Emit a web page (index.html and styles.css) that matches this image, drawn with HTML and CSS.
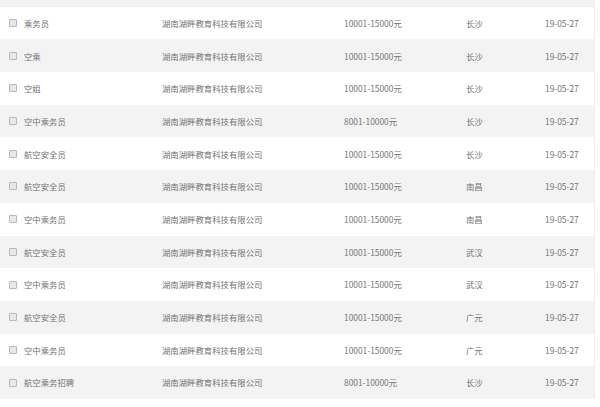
FILE: index.html
```html
<!DOCTYPE html>
<html lang="zh">
<head>
<meta charset="utf-8">
<link rel="stylesheet" href="styles.css">
</head>
<body>
<div class="list">
  <div class="row row-partial"></div>
  <div class="row"><span class="cb"></span><span class="c-name">乘务员</span><span class="c-co">湖南湖畔教育科技有限公司</span><span class="c-pay">10001-15000元</span><span class="c-city">长沙</span><span class="c-date">19-05-27</span></div>
  <div class="row"><span class="cb"></span><span class="c-name">空乘</span><span class="c-co">湖南湖畔教育科技有限公司</span><span class="c-pay">10001-15000元</span><span class="c-city">长沙</span><span class="c-date">19-05-27</span></div>
  <div class="row"><span class="cb"></span><span class="c-name">空姐</span><span class="c-co">湖南湖畔教育科技有限公司</span><span class="c-pay">10001-15000元</span><span class="c-city">长沙</span><span class="c-date">19-05-27</span></div>
  <div class="row"><span class="cb"></span><span class="c-name">空中乘务员</span><span class="c-co">湖南湖畔教育科技有限公司</span><span class="c-pay">8001-10000元</span><span class="c-city">长沙</span><span class="c-date">19-05-27</span></div>
  <div class="row"><span class="cb"></span><span class="c-name">航空安全员</span><span class="c-co">湖南湖畔教育科技有限公司</span><span class="c-pay">10001-15000元</span><span class="c-city">长沙</span><span class="c-date">19-05-27</span></div>
  <div class="row"><span class="cb"></span><span class="c-name">航空安全员</span><span class="c-co">湖南湖畔教育科技有限公司</span><span class="c-pay">10001-15000元</span><span class="c-city">南昌</span><span class="c-date">19-05-27</span></div>
  <div class="row"><span class="cb"></span><span class="c-name">空中乘务员</span><span class="c-co">湖南湖畔教育科技有限公司</span><span class="c-pay">10001-15000元</span><span class="c-city">南昌</span><span class="c-date">19-05-27</span></div>
  <div class="row"><span class="cb"></span><span class="c-name">航空安全员</span><span class="c-co">湖南湖畔教育科技有限公司</span><span class="c-pay">10001-15000元</span><span class="c-city">武汉</span><span class="c-date">19-05-27</span></div>
  <div class="row"><span class="cb"></span><span class="c-name">空中乘务员</span><span class="c-co">湖南湖畔教育科技有限公司</span><span class="c-pay">10001-15000元</span><span class="c-city">武汉</span><span class="c-date">19-05-27</span></div>
  <div class="row"><span class="cb"></span><span class="c-name">航空安全员</span><span class="c-co">湖南湖畔教育科技有限公司</span><span class="c-pay">10001-15000元</span><span class="c-city">广元</span><span class="c-date">19-05-27</span></div>
  <div class="row"><span class="cb"></span><span class="c-name">空中乘务员</span><span class="c-co">湖南湖畔教育科技有限公司</span><span class="c-pay">10001-15000元</span><span class="c-city">广元</span><span class="c-date">19-05-27</span></div>
  <div class="row"><span class="cb"></span><span class="c-name">航空乘务招聘</span><span class="c-co">湖南湖畔教育科技有限公司</span><span class="c-pay">8001-10000元</span><span class="c-city">长沙</span><span class="c-date">19-05-27</span></div>
</div>
</body>
</html>
```

FILE: styles.css
```css
html, body {
  margin: 0;
  padding: 0;
  background: #ffffff;
}
body {
  font-family: "Noto Sans CJK SC", "Noto Sans", sans-serif;
  font-size: 8.4px;
  color: #737373;
  overflow: hidden;
  height: 407px;
}
.list {
  width: 594px;
  border-right: 1px solid #efefef;
}
.row {
  display: grid;
  grid-template-columns: 24px 138px 182px 122px 79px 1fr;
  align-items: center;
  height: 32.7px;
  box-sizing: border-box;
}
.row:nth-child(odd) {
  background: #f3f3f3;
}
.row-partial {
  height: 6.7px;
  border-bottom: 1px solid #ebebeb;
}
.cb {
  width: 6px;
  height: 6px;
  margin-left: 9px;
  border: 1px solid #b8b8b8;
  border-radius: 1px;
  background: #e8e8e8;
}
.c-name, .c-co, .c-pay, .c-city, .c-date {
  white-space: nowrap;
  line-height: 1;
}
```
